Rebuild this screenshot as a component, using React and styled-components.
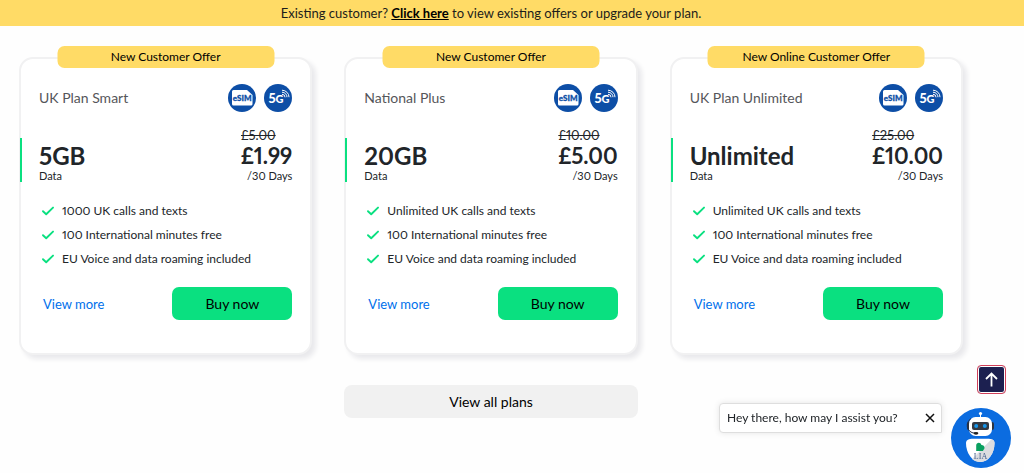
import React, { useState } from "react";
import styled, { createGlobalStyle } from "styled-components";

const GlobalStyle = createGlobalStyle`
  * {
    box-sizing: border-box;
  }
  body {
    margin: 0;
    background: #fefefe;
    color: #212529;
    font-family: Lato, "Open Sans", sans-serif;
    font-size: 12px;
    line-height: 16px;
    font-variant-numeric: proportional-nums;
  }
  button {
    font-family: inherit;
    cursor: pointer;
  }
`;

const Banner = styled.div`
  padding: 3px 61px 3px 19px;
  background: #ffdb66;
  color: #1d1d1b;
  font-size: 13px;
  line-height: 20px;
  text-align: center;
`;

const BannerLink = styled.a`
  color: #000;
  font-weight: 700;
`;

const Main = styled.main`
  padding: 31px 61px 32px 19px;
`;

const Plans = styled.div`
  display: grid;
  grid-template-columns: repeat(3, 1fr);
  gap: 32px;
  @media (max-width: 768px) {
    grid-template-columns: 1fr;
  }
`;

const Card = styled.article`
  position: relative;
  padding: 25px 18px 33px;
  border: 2px solid #f1f1f2;
  border-radius: 14px;
  background: #fff;
  box-shadow: 4px 4px 5px #e9e9ec;
`;

const OfferBadge = styled.div`
  position: absolute;
  top: -13px;
  left: 50%;
  width: 75%;
  padding: 3px 0;
  transform: translateX(-50%);
  border-radius: 7px;
  background: #ffdb66;
  color: #000;
  text-align: center;
`;

const CardHeader = styled.div`
  display: flex;
  align-items: center;
  justify-content: space-between;
`;

const PlanName = styled.h2`
  margin: 0;
  color: #55565a;
  font-size: 14px;
  font-weight: 400;
`;

const Badges = styled.div`
  display: flex;
  gap: 8px;
`;

const Summary = styled.div`
  display: flex;
  align-items: flex-end;
  justify-content: space-between;
  margin: 15px 0 17px -19px;
`;

const Allowance = styled.div`
  padding: 5px 0 0 17px;
  border-left: 2px solid #0ae080;
`;

const Amount = styled.div`
  font-size: 24px;
  font-weight: 700;
  line-height: 26px;
`;

const Price = styled.div`
  display: flex;
  flex-direction: column;
`;

const OldPrice = styled.s`
  font-size: 13px;
`;

const NewPrice = styled.div`
  font-size: 22px;
  font-weight: 700;
  line-height: 26px;
`;

const Small = styled.div`
  font-size: 11px;
  line-height: 13px;
  text-align: ${({ $right }) => ($right ? "right" : "left")};
`;

const Features = styled.ul`
  margin: 0;
  padding: 0 0 0 3px;
  list-style: none;
`;

const Feature = styled.li`
  display: flex;
  align-items: center;
  gap: 8px;
  line-height: 24px;
`;

const Actions = styled.div`
  display: flex;
  align-items: center;
  justify-content: space-between;
  padding-left: 4px;
  margin-top: 16px;
`;

const MoreLink = styled.a`
  color: #0070eb;
  font-size: 13px;
  text-decoration: none;
`;

const BuyButton = styled.button`
  width: 120px;
  height: 33px;
  border: 0;
  border-radius: 7px;
  background: #0ae080;
  color: #000;
  font-size: 14px;
`;

const AllPlansButton = styled.button`
  display: block;
  width: calc((100% - 64px) / 3);
  height: 33px;
  margin: 30px auto 0;
  border: 0;
  border-radius: 8px;
  background: #f1f1f1;
  color: #000;
  font-size: 14px;
`;

const TopButton = styled.button`
  position: fixed;
  right: 18px;
  bottom: 79px;
  display: flex;
  align-items: center;
  justify-content: center;
  width: 29px;
  height: 29px;
  padding: 0;
  border: 1px solid #d0405a;
  border-radius: 4px;
  background: #1c2050;
  background-clip: padding-box;
  box-shadow: inset 0 0 0 1px #fff;
`;

const ChatMessage = styled.div`
  position: fixed;
  right: 82px;
  bottom: 40px;
  display: flex;
  align-items: center;
  justify-content: space-between;
  width: 223px;
  height: 30px;
  padding: 0 6px 0 7px;
  border: 1px solid #dedede;
  border-radius: 4px 4px 0 4px;
  background: #fff;
  box-shadow: 0 0 6px #e6e6e6;
`;

const CloseButton = styled.button`
  display: flex;
  padding: 0;
  border: 0;
  background: none;
`;

const ChatButton = styled.button`
  position: fixed;
  right: 13px;
  bottom: 5px;
  display: flex;
  width: 60px;
  height: 60px;
  padding: 0;
  border: 0;
  border-radius: 50%;
  background: #0b6ce0;
`;

const Check = () => (
    <svg width="12" height="10" viewBox="0 0 12 10" fill="none" aria-hidden="true">
        <path d="M1 5.2 4.2 8.2 11 1.6" stroke="#0ae080" strokeWidth="1.9" strokeLinecap="round" strokeLinejoin="round" />
    </svg>
);

const EsimIcon = () => (
    <svg width="28" height="28" viewBox="0 0 28 28" role="img" aria-label="eSIM">
        <circle cx="14" cy="14" r="14" fill="#0d4ea6" />
        <path d="M5.5 6h13.500l5.500 5v9a1.5 1.5 0 0 1-1.5 1.5H5.5A1.5 1.5 0 0 1 4 20V7.5A1.5 1.5 0 0 1 5.5 6Z" fill="#fff" />
        <text x="14.2" y="17" fill="#0d4ea6" stroke="#0d4ea6" strokeWidth="0.3" fontFamily="Lato, sans-serif" fontSize="8" fontWeight="900" textAnchor="middle">eSIM</text>
    </svg>
);

const FiveGIcon = () => (
    <svg width="28" height="28" viewBox="0 0 28 28" role="img" aria-label="5G">
        <circle cx="14" cy="14" r="14" fill="#0d4ea6" />
        <text x="4.5" y="19" fill="#fff" fontFamily="Lato, sans-serif" fontSize="13" fontWeight="900">5</text>
        <text x="11.5" y="19" fill="#fff" fontFamily="Lato, sans-serif" fontSize="11" fontWeight="900">G</text>
        <g stroke="#fff" fill="none" strokeWidth="1">
            <path d="M18 10.3a3 3 0 0 1 3 3" />
            <path d="M18 8.2a5 5 0 0 1 5 5" />
            <path d="M18 6.2a7 7 0 0 1 7 7" />
        </g>
    </svg>
);

const ArrowUp = () => (
    <svg width="17" height="17" viewBox="0 0 17 17" fill="none" stroke="#fff" strokeWidth="1.8" aria-hidden="true">
        <path d="M8.5 15.5V2.5M3 8l5.5-5.5L14 8" />
    </svg>
);

const Cross = () => (
    <svg width="10" height="10" viewBox="0 0 10 10" stroke="#111" strokeWidth="1.5" aria-hidden="true">
        <path d="M1 1l8 8M9 1L1 9" />
    </svg>
);

const Robot = () => (
    <svg width="60" height="60" viewBox="0 0 60 60" aria-hidden="true">
        <path d="M29.5 11V6" stroke="#fff" strokeWidth="1" />
        <circle cx="29.5" cy="5.5" r="1.6" fill="#fff" />
        <rect x="16" y="14" width="4" height="8" rx="2" fill="#2b3340" />
        <rect x="39" y="14" width="4" height="8" rx="2" fill="#2b3340" />
        <rect x="18" y="9" width="23" height="19" rx="6.5" fill="#fff" />
        <path d="M20 10.5c-6 4-5 14 4 14.8" fill="none" stroke="#24304a" strokeWidth="1" />
        <rect x="21" y="14" width="17" height="8" rx="2" fill="#343942" />
        <circle cx="25.2" cy="18" r="2" fill="#1695e8" />
        <circle cx="33.8" cy="18" r="2" fill="#1695e8" />
        <ellipse cx="25" cy="25.3" rx="2.4" ry="1.4" fill="#222" />
        <path d="M15 35c0-3 3-4.3 7-4.3h14.500c4 0 7 1.3 7 4.3 0 10-6 19-14.200 19S15 45 15 35Z" fill="#fff" />
        <path d="M43.500 35c0-2-1-3.2-3-3.8L21 51c2.300 2 5 3 8.300 3 8.200 0 14.200-9 14.200-19Z" fill="#dcdde0" />
        <path d="M25.200 43V37.5c0-3.300 4.500-3.600 5.200-.6 3-.2 4.200 3.300 2 5L32 43Z" fill="#0aa060" />
        <text x="29.5" y="50.5" fill="#46608c" fontFamily="Liberation Serif, serif" fontSize="8" textAnchor="middle">LIA</text>
    </svg>
);

const plans = [
    {
        name: "UK Plan Smart",
        offer: "New Customer Offer",
        data: "5GB",
        oldPrice: "£5.00",
        price: "£1.99",
        features: ["1000 UK calls and texts", "100 International minutes free", "EU Voice and data roaming included"],
    },
    {
        name: "National Plus",
        offer: "New Customer Offer",
        data: "20GB",
        oldPrice: "£10.00",
        price: "£5.00",
        features: ["Unlimited UK calls and texts", "100 International minutes free", "EU Voice and data roaming included"],
    },
    {
        name: "UK Plan Unlimited",
        offer: "New Online Customer Offer",
        data: "Unlimited",
        oldPrice: "£25.00",
        price: "£10.00",
        features: ["Unlimited UK calls and texts", "100 International minutes free", "EU Voice and data roaming included"],
    },
];

const PlanCard = ({ plan }) => (
    <Card>
        <OfferBadge>{plan.offer}</OfferBadge>
        <CardHeader>
            <PlanName>{plan.name}</PlanName>
            <Badges>
                <EsimIcon />
                <FiveGIcon />
            </Badges>
        </CardHeader>
        <Summary>
            <Allowance>
                <Amount>{plan.data}</Amount>
                <Small>Data</Small>
            </Allowance>
            <Price>
                <OldPrice>{plan.oldPrice}</OldPrice>
                <NewPrice>{plan.price}</NewPrice>
                <Small $right>/30 Days</Small>
            </Price>
        </Summary>
        <Features>
            {plan.features.map((feature) => (
                <Feature key={feature}>
                    <Check />
                    {feature}
                </Feature>
            ))}
        </Features>
        <Actions>
            <MoreLink href="#">View more</MoreLink>
            <BuyButton>Buy now</BuyButton>
        </Actions>
    </Card>
);

const App = () => {
    const [chatOpen, setChatOpen] = useState(true);

    return (
        <>
            <GlobalStyle />
            <Banner>
                Existing customer? <BannerLink href="#">Click here</BannerLink> to view existing offers or upgrade your plan.
            </Banner>
            <Main>
                <Plans>
                    {plans.map((plan) => (
                        <PlanCard key={plan.name} plan={plan} />
                    ))}
                </Plans>
                <AllPlansButton>View all plans</AllPlansButton>
            </Main>
            <TopButton aria-label="Back to top" onClick={() => window.scrollTo(0, 0)}>
                <ArrowUp />
            </TopButton>
            {chatOpen && (
                <ChatMessage>
                    <span>Hey there, how may I assist you?</span>
                    <CloseButton aria-label="Close" onClick={() => setChatOpen(false)}>
                        <Cross />
                    </CloseButton>
                </ChatMessage>
            )}
            <ChatButton aria-label="Open chat">
                <Robot />
            </ChatButton>
        </>
    );
};

export default App;
